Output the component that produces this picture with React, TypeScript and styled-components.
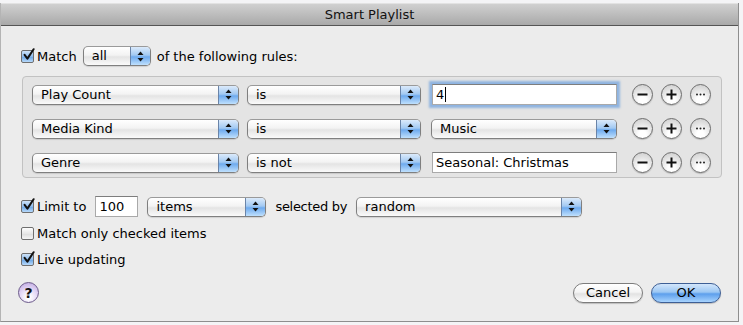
import React from "react";
import styled, { createGlobalStyle } from "styled-components";

const GlobalStyle = createGlobalStyle`
  html, body {
    margin: 0;
    padding: 0;
    background: #f4f4f6;
  }
  body {
    font-family: "DejaVu Sans", "Lucida Grande", sans-serif;
    font-size: 13px;
    color: #000;
  }
`;

interface Rule {
  field: string;
  op: string;
  value: string;
  kind: "text" | "popup";
  focused?: boolean;
}

const rules: Rule[] = [
  { field: "Play Count", op: "is", value: "4", kind: "text", focused: true },
  { field: "Media Kind", op: "is", value: "Music", kind: "popup" },
  { field: "Genre", op: "is not", value: "Seasonal: Christmas", kind: "text" },
];

const Arrows = () => (
  <svg width="7" height="11" viewBox="0 0 7 11">
    <path d="M3.5 0.5 L6.5 4 L0.5 4 Z" fill="#111" />
    <path d="M3.5 10.5 L6.5 7 L0.5 7 Z" fill="#111" />
  </svg>
);

const Check = () => (
  <svg width="14" height="14" viewBox="0 0 14 14">
    <path
      d="M2.6 6.8 L5.4 10.6 L11.6 1.2"
      fill="none"
      stroke="#111"
      strokeWidth="2"
      strokeLinecap="round"
      strokeLinejoin="round"
    />
  </svg>
);

const PopUp = ({ label, width }: { label: string; width: number }) => (
  <PopUpBox width={width}>
    <PopUpLabel>{label}</PopUpLabel>
    <PopUpArrow>
      <Arrows />
    </PopUpArrow>
  </PopUpBox>
);

const CheckBox = ({ checked, label }: { checked: boolean; label: string }) => (
  <CheckRow>
    <Box checked={checked}>{checked && <Check />}</Box>
    <span>{label}</span>
  </CheckRow>
);

const RoundButton = ({ kind }: { kind: "minus" | "plus" | "more" }) => (
  <Round>
    <svg width="21" height="21" viewBox="0 0 21 21">
      {kind !== "more" && (
        <path d="M5.5 10.5 H15.5" stroke="#111" strokeWidth="2" />
      )}
      {kind === "plus" && (
        <path d="M10.5 5.5 V15.5" stroke="#111" strokeWidth="2" />
      )}
      {kind === "more" && (
        <g fill="#222">
          <circle cx="7" cy="10.5" r="1" />
          <circle cx="10.5" cy="10.5" r="1" />
          <circle cx="14" cy="10.5" r="1" />
        </g>
      )}
    </svg>
  </Round>
);

const App = () => (
  <>
    <GlobalStyle />
    <Page>
      <Window>
        <TitleBar>Smart Playlist</TitleBar>
        <Content>
          <MatchRow>
            <CheckRow>
              <Box checked>
                <Check />
              </Box>
              <span>Match</span>
            </CheckRow>
            <PopUp label="all" width={68} />
            <span>of the following rules:</span>
          </MatchRow>

          <RulesBox>
            {rules.map((rule, i) => (
              <RuleRow key={i}>
                <PopUp label={rule.field} width={207} />
                <PopUp label={rule.op} width={174} />
                {rule.kind === "popup" ? (
                  <ValuePopUp>
                    <PopUp label={rule.value} width={186} />
                  </ValuePopUp>
                ) : (
                  <TextField width={185} inset={3} focused={rule.focused}>
                    {rule.value}
                    {rule.focused && <Caret />}
                  </TextField>
                )}
                <RoundGroup>
                  <RoundButton kind="minus" />
                  <RoundButton kind="plus" />
                  <RoundButton kind="more" />
                </RoundGroup>
              </RuleRow>
            ))}
          </RulesBox>

          <LimitRow>
            <CheckBox checked label="Limit to" />
            <TextField width={43} inset={0}>
              100
            </TextField>
            <PopUp label="items" width={119} />
            <SelectedBy>selected by</SelectedBy>
            <PopUp label="random" width={226} />
          </LimitRow>
          <OptionRow top={9}>
            <CheckBox checked={false} label="Match only checked items" />
          </OptionRow>
          <OptionRow top={11}>
            <CheckBox checked label="Live updating" />
          </OptionRow>

          <Footer>
            <HelpButton>?</HelpButton>
            <Buttons>
              <PushButton>Cancel</PushButton>
              <PushButton primary>OK</PushButton>
            </Buttons>
          </Footer>
        </Content>
      </Window>
    </Page>
  </>
);

const Page = styled.div`
  padding-top: 3px;
  width: 743px;
  height: 322px;
`;

const Window = styled.div`
  width: 739px;
  height: 319px;
  background: #ececec;
  border-right: 1px solid #8e8e8e;
  border-bottom: 1px solid #8e8e8e;
  border-left: 1px solid #b4b4b4;
  box-sizing: border-box;
  display: flex;
  flex-direction: column;
`;

const TitleBar = styled.div`
  height: 21px;
  flex: none;
  display: flex;
  align-items: center;
  justify-content: center;
  background: linear-gradient(#d0d0d0, #a9a9a9);
  border-top: 1px solid #e2e2e2;
  border-bottom: 1px solid #555;
  color: #111;
  font-size: 13px;
`;

const Content = styled.div`
  flex: 1;
  display: flex;
  flex-direction: column;
  padding: 20px 0 0 20px;
`;

const MatchRow = styled.div`
  display: flex;
  align-items: center;
  gap: 6px;
  height: 20px;
`;

const CheckRow = styled.label`
  display: flex;
  align-items: center;
  gap: 3px;
  white-space: nowrap;
`;

const Box = styled.span<{ checked: boolean }>`
  width: 13px;
  height: 13px;
  box-sizing: border-box;
  border: 1px solid #6f6f6f;
  border-radius: 2px;
  position: relative;
  background: ${(p) =>
    p.checked
      ? "linear-gradient(#cfe3f8, #8fbcec 50%, #6ea8e6 55%, #b8d9fa)"
      : "linear-gradient(#fdfdfd, #e7e7e7 50%, #dedede 55%, #f5f5f5)"};

  svg {
    position: absolute;
    left: 0;
    top: -3px;
  }
`;

const PopUpBox = styled.div<{ width: number }>`
  width: ${(p) => p.width}px;
  height: 20px;
  box-sizing: border-box;
  display: flex;
  border: 1px solid #7f7f7f;
  border-top-color: #9a9a9a;
  border-radius: 5px;
  overflow: hidden;
  background: linear-gradient(#ffffff, #f3f3f3 45%, #e4e4e4 55%, #fafafa);
  box-shadow: 0 1px 1px rgba(0, 0, 0, 0.12);
  flex: none;
`;

const PopUpLabel = styled.span`
  flex: 1;
  padding-left: 8px;
  line-height: 18px;
  white-space: nowrap;
  overflow: hidden;
`;

const PopUpArrow = styled.span`
  width: 19px;
  display: flex;
  align-items: center;
  justify-content: center;
  border-left: 1px solid #6a84a8;
  background: linear-gradient(#dbeafb, #a2c9f2 45%, #6eaaee 55%, #bfe0fd);
`;

const RulesBox = styled.div`
  margin: 10px 0 0 1px;
  width: 700px;
  box-sizing: border-box;
  padding: 7px 0 4px 9px;
  background: #e4e4e4;
  border: 1px solid #c2c2c2;
  border-radius: 4px;
  display: flex;
  flex-direction: column;
  gap: 13px;
`;

const RuleRow = styled.div`
  display: flex;
  align-items: center;
  height: 21px;
  gap: 8px;
`;

const ValuePopUp = styled.div`
  padding-left: 2px;
`;

const TextField = styled.div<{ width: number; inset: number; focused?: boolean }>`
  width: ${(p) => p.width}px;
  height: 21px;
  box-sizing: border-box;
  flex: none;
  display: flex;
  align-items: center;
  padding-left: 3px;
  margin-left: ${(p) => p.inset}px;
  background: #fff;
  border: 1px solid #a9a9a9;
  border-top-color: #7d7d7d;
  white-space: nowrap;
  overflow: hidden;
  box-shadow: ${(p) =>
    p.focused ? "0 0 0 1px #8eb4e2, 0 0 2px 3px rgba(118, 165, 222, 0.75)" : "none"};
`;

const Caret = styled.span`
  width: 1px;
  height: 15px;
  background: #000;
  margin-left: 1px;
`;

const RoundGroup = styled.div`
  display: flex;
  gap: 8px;
  margin-left: 7px;
`;

const Round = styled.span`
  width: 21px;
  height: 21px;
  box-sizing: border-box;
  border-radius: 50%;
  border: 1px solid #6d6d6d;
  background: radial-gradient(circle at 50% 80%, #ffffff 20%, #e6e6e6 55%, #c9c9c9 100%);
  box-shadow: 0 1px 1px rgba(0, 0, 0, 0.2);
  display: flex;
  align-items: center;
  justify-content: center;

  svg {
    margin: -1px;
  }
`;

const LimitRow = styled.div`
  display: flex;
  align-items: center;
  gap: 9px;
  margin-top: 18px;
  height: 21px;
`;

const SelectedBy = styled.span`
  letter-spacing: -0.3px;
`;

const OptionRow = styled.div<{ top: number }>`
  display: flex;
  margin-top: ${(p) => p.top}px;
`;

const Footer = styled.div`
  display: flex;
  align-items: center;
  justify-content: space-between;
  margin-top: 15px;
  padding-right: 17px;
  margin-left: -3px;
`;

const HelpButton = styled.span`
  width: 21px;
  height: 21px;
  box-sizing: border-box;
  border-radius: 50%;
  border: 1px solid #6b5a8a;
  background: radial-gradient(circle at 50% 75%, #ffffff 10%, #e4d7f6 50%, #b7a0dc 100%);
  display: flex;
  align-items: center;
  justify-content: center;
  font-weight: bold;
  font-size: 14px;
  color: #111;
`;

const Buttons = styled.div`
  display: flex;
  gap: 8px;
`;

const PushButton = styled.span<{ primary?: boolean }>`
  width: 70px;
  height: 20px;
  box-sizing: border-box;
  border-radius: 10px;
  display: flex;
  align-items: center;
  justify-content: center;
  border: 1px solid ${(p) => (p.primary ? "#3e5f95" : "#7c7c7c")};
  background: ${(p) =>
    p.primary
      ? "linear-gradient(#d3e6fb, #9cc7f3 45%, #5d9fec 55%, #a7d3fe)"
      : "linear-gradient(#ffffff, #f4f4f4 45%, #e2e2e2 55%, #ffffff)"};
  box-shadow: 0 1px 1px rgba(0, 0, 0, 0.2);
`;

export default App;
